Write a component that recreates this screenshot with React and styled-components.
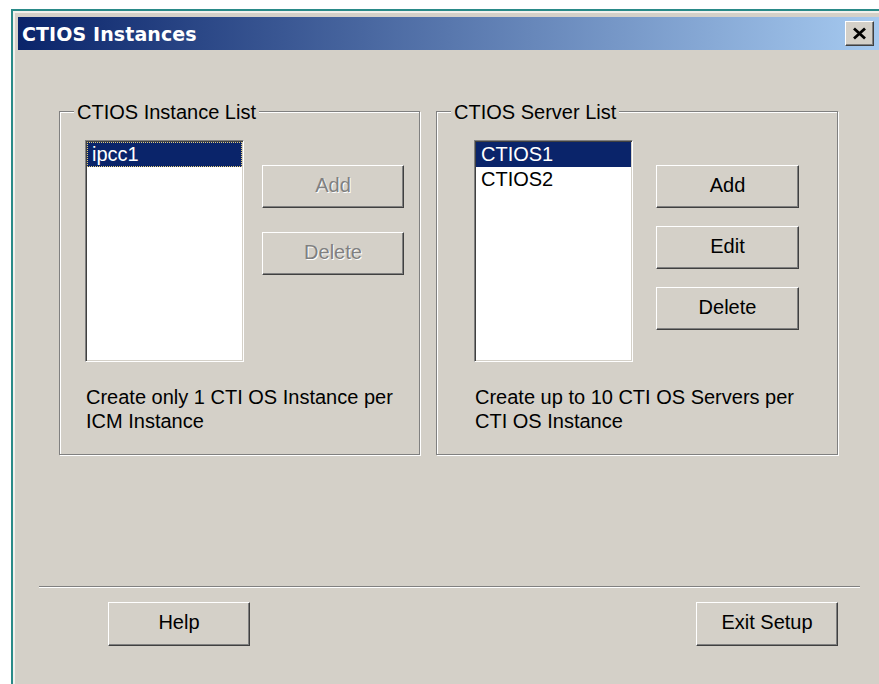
import React from "react";
import styled, { createGlobalStyle } from "styled-components";

const GlobalStyle = createGlobalStyle`
  html, body {
    margin: 0;
    padding: 0;
    background: #ffffff;
    overflow: hidden;
  }
  body {
    font-family: "Liberation Sans", Arial, sans-serif;
  }
`;

const FACE = "#D4D0C8";

const Window = styled.div`
  margin: 9px 0 0 11px;
  width: 880px;
  height: 675px;
  box-sizing: border-box;
  border-top: 2px solid #2a8a88;
  border-left: 2px solid #2a8a88;
`;

const Frame = styled.div`
  height: 100%;
  box-sizing: border-box;
  background: ${FACE};
  border-top: 2px solid #f2f0ec;
  border-left: 2px solid #f2f0ec;
  padding: 4px 0 0 3px;
`;

const TitleBar = styled.div`
  display: flex;
  align-items: center;
  justify-content: space-between;
  box-sizing: border-box;
  width: 862px;
  height: 33px;
  padding: 0 6px 0 4px;
  background: linear-gradient(to right, #0a246a, #a6caf0);
`;

const Title = styled.span`
  font-family: "DejaVu Sans", Verdana, sans-serif;
  font-weight: bold;
  font-size: 19px;
  color: #ffffff;
  letter-spacing: 0.1px;
`;

const CloseButton = styled.button`
  display: flex;
  align-items: center;
  justify-content: center;
  box-sizing: border-box;
  width: 29px;
  height: 25px;
  padding: 0;
  background: ${FACE};
  border: 1px solid;
  border-color: #ffffff #404040 #404040 #ffffff;
  box-shadow: inset -1px -1px 0 #808080;
`;

const Body = styled.div`
  padding: 61px 0 0 21px;
`;

const GroupsRow = styled.div`
  display: flex;
  gap: 16px;
  margin-left: 20px;
`;

const Group = styled.div`
  position: relative;
  box-sizing: border-box;
  width: ${(p) => p.$w}px;
  height: 344px;
  border: 1px solid #808080;
  box-shadow: inset 1px 1px 0 #ffffff, 1px 1px 0 #ffffff;
  padding: 28px 0 0 ${(p) => p.$pl}px;
`;

const Legend = styled.span`
  position: absolute;
  top: -12px;
  left: 14px;
  padding: 0 3px;
  background: ${FACE};
  font-size: 20px;
  line-height: 24px;
  color: #000000;
`;

const ListRow = styled.div`
  display: flex;
  align-items: flex-start;
`;

const ListBox = styled.div`
  box-sizing: border-box;
  width: 159px;
  height: 222px;
  padding: 1px;
  background: #ffffff;
  border: 1px solid;
  border-color: #808080 #ffffff #ffffff #808080;
  box-shadow: inset 1px 1px 0 #404040, inset -1px -1px 0 ${FACE};
`;

const ListItem = styled.div`
  height: 25px;
  line-height: 25px;
  padding-left: 5px;
  font-size: 20px;
  color: ${(p) => (p.$selected ? "#ffffff" : "#000000")};
  background: ${(p) => (p.$selected ? "#0a246a" : "transparent")};
  outline: ${(p) => (p.$focused ? "1px dotted #e2cc7a" : "none")};
  outline-offset: -1px;
`;

const ButtonColumn = styled.div`
  display: flex;
  flex-direction: column;
  gap: ${(p) => p.$gap}px;
  margin-left: ${(p) => p.$ml}px;
  padding-top: 25px;
`;

const Button = styled.button`
  box-sizing: border-box;
  width: ${(p) => p.$w}px;
  height: ${(p) => p.$h || 43}px;
  padding: 0 0 3px;
  font-family: "Liberation Sans", Arial, sans-serif;
  font-size: 20px;
  color: #000000;
  background: ${FACE};
  border: 1px solid;
  border-color: #ffffff #404040 #404040 #ffffff;
  box-shadow: inset -1px -1px 0 #808080;

  &:disabled {
    color: #808080;
    text-shadow: 1px 1px 0 #ffffff;
  }
`;

const Hint = styled.p`
  margin: 23px 0 0;
  padding-left: 1px;
  font-size: 20px;
  line-height: 24px;
  color: #000000;
`;

const Separator = styled.div`
  width: 821px;
  margin-top: 131px;
  border-top: 1px solid #808080;
  border-bottom: 1px solid #ffffff;
`;

const Footer = styled.div`
  display: flex;
  justify-content: space-between;
  width: 730px;
  margin: 14px 0 0 69px;
`;

function CloseGlyph() {
  return (
    <svg width="15" height="13" viewBox="0 0 15 13">
      <path d="M2 1.5 L13 11.5 M13 1.5 L2 11.5" stroke="#000" strokeWidth="2.8" fill="none" />
    </svg>
  );
}

export default function App() {
  return (
    <>
      <GlobalStyle />
      <Window>
        <Frame>
          <TitleBar>
            <Title>CTIOS Instances</Title>
            <CloseButton aria-label="Close">
              <CloseGlyph />
            </CloseButton>
          </TitleBar>
          <Body>
            <GroupsRow>
              <Group $w={361} $pl={25}>
                <Legend>CTIOS Instance List</Legend>
                <ListRow>
                  <ListBox>
                    <ListItem $selected $focused>ipcc1</ListItem>
                  </ListBox>
                  <ButtonColumn $gap={24} $ml={18}>
                    <Button $w={142} disabled>Add</Button>
                    <Button $w={142} disabled>Delete</Button>
                  </ButtonColumn>
                </ListRow>
                <Hint>
                  Create only 1 CTI OS Instance per
                  <br />
                  ICM Instance
                </Hint>
              </Group>
              <Group $w={402} $pl={37}>
                <Legend>CTIOS Server List</Legend>
                <ListRow>
                  <ListBox>
                    <ListItem $selected>CTIOS1</ListItem>
                    <ListItem>CTIOS2</ListItem>
                  </ListBox>
                  <ButtonColumn $gap={18} $ml={23}>
                    <Button $w={143}>Add</Button>
                    <Button $w={143}>Edit</Button>
                    <Button $w={143}>Delete</Button>
                  </ButtonColumn>
                </ListRow>
                <Hint>
                  Create up to 10 CTI OS Servers per
                  <br />
                  CTI OS Instance
                </Hint>
              </Group>
            </GroupsRow>
            <Separator />
            <Footer>
              <Button $w={142} $h={44}>Help</Button>
              <Button $w={142} $h={44}>Exit Setup</Button>
            </Footer>
          </Body>
        </Frame>
      </Window>
    </>
  );
}
